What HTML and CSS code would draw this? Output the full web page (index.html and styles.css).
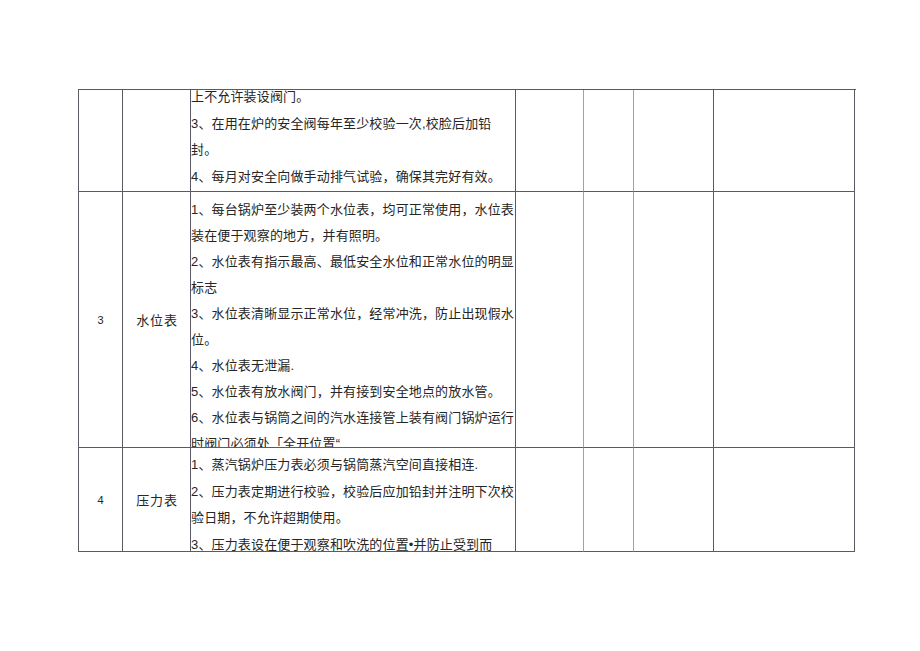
FILE: index.html
```html
<!DOCTYPE html>
<html lang="zh">
<head>
<meta charset="utf-8">
<title>锅炉安全检查表</title>
<link rel="stylesheet" href="styles.css">
</head>
<body>
<div class="sheet">
  <div class="grid">
    <div class="cell r1 c1"></div>
    <div class="cell r1 c2"></div>
    <div class="cell r1 c3 txt">
      <div class="lines l1">
        <div>上不允许装设阀门。</div>
        <div>3、在用在炉的安全阀每年至少校验一次,校脸后加铅</div>
        <div>封。</div>
        <div>4、每月对安全向做手动排气试验，确保其完好有效。</div>
      </div>
    </div>
    <div class="cell r1 c4"></div>
    <div class="cell r1 c5 light"></div>
    <div class="cell r1 c6 light"></div>
    <div class="cell r1 c7"></div>

    <div class="cell r2 c1 num">3</div>
    <div class="cell r2 c2 name">水位表</div>
    <div class="cell r2 c3 txt">
      <div class="lines l2">
        <div>1、每台锅炉至少装两个水位表，均可正常使用，水位表</div>
        <div>装在便于观察的地方，并有照明。</div>
        <div>2、水位表有指示最高、最低安全水位和正常水位的明显</div>
        <div>标志</div>
        <div>3、水位表清晰显示正常水位，经常冲洗，防止出现假水</div>
        <div>位。</div>
        <div>4、水位表无泄漏.</div>
        <div>5、水位表有放水阀门，并有接到安全地点的放水管。</div>
        <div>6、水位表与锅筒之间的汽水连接管上装有阀门锅炉运行</div>
        <div>时阀门必须处「全开位置“</div>
      </div>
    </div>
    <div class="cell r2 c4"></div>
    <div class="cell r2 c5 light"></div>
    <div class="cell r2 c6 light"></div>
    <div class="cell r2 c7"></div>

    <div class="cell r3 c1 num">4</div>
    <div class="cell r3 c2 name">压力表</div>
    <div class="cell r3 c3 txt">
      <div class="lines l3">
        <div>1、蒸汽锅炉压力表必须与锅筒蒸汽空间直接相连.</div>
        <div>2、压力表定期进行校验，校验后应加铅封并注明下次校</div>
        <div>验日期，不允许超期使用。</div>
        <div>3、压力表设在便于观察和吹洗的位置•并防止受到而</div>
      </div>
    </div>
    <div class="cell r3 c4"></div>
    <div class="cell r3 c5 light"></div>
    <div class="cell r3 c6 light"></div>
    <div class="cell r3 c7"></div>
  </div>
</div>
</body>
</html>
```

FILE: styles.css
```css
html, body {
  margin: 0;
  padding: 0;
  background: #ffffff;
}

body {
  font-family: "Liberation Sans", "Noto Sans CJK SC", sans-serif;
  color: #262626;
}

.sheet {
  padding: 89px 0 0 78px;
}

.grid {
  display: grid;
  grid-template-columns: 44px 68px 325px 68px 50px 80px 141px;
  grid-template-rows: 102px 256px 104px;
  width: 777px;
  border-top: 1px solid #5d5862;
  border-left: 1px solid #5d5862;
}

.cell {
  box-sizing: border-box;
  border-right: 1px solid #5d5862;
  border-bottom: 1px solid #5d5862;
  overflow: hidden;
  min-width: 0;
}

.cell.c4 {
  border-right-color: #a3a0a6;
}

.cell.c5 {
  border-right-color: #a3a0a6;
}

.num {
  display: flex;
  align-items: center;
  justify-content: center;
  font-size: 11px;
  padding-top: 1px;
}

.name {
  display: flex;
  align-items: center;
  justify-content: center;
  font-size: 13px;
  letter-spacing: 0.8px;
  padding-left: 1px;
}

.txt {
  font-size: 13px;
  letter-spacing: 0.15px;
  white-space: nowrap;
  padding-left: 0;
}

.lines div {
  height: 26.7px;
  line-height: 26.7px;
}

.l1 {
  margin-top: -6px;
}

.l2 {
  padding-top: 5px;
}

.l2 div {
  height: 26px;
  line-height: 26px;
}

.l3 {
  padding-top: 4px;
}
```
